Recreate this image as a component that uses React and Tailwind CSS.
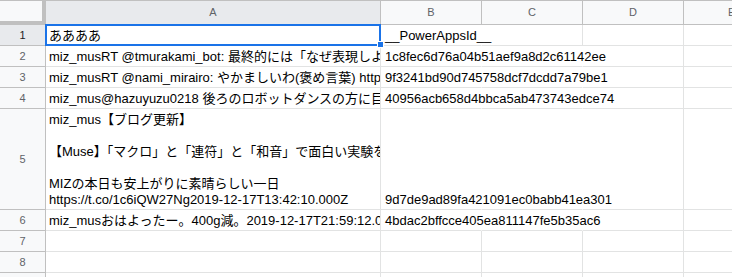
import React from 'react';

const font = { fontFamily: '"Liberation Sans", Arial, "Noto Sans CJK JP", sans-serif' };

const rows = [
  { n: 1, a: 'ああああ', b: '__PowerAppsId__', sel: true, hideB: true },
  { n: 2, a: 'miz_musRT @tmurakami_bot: 最終的には「なぜ表現しようとするのか」', b: '1c8fec6d76a04b51aef9a8d2c61142ee', hideB: true, hideC: true },
  { n: 3, a: 'miz_musRT @nami_mirairo: やかましいわ(褒め言葉) https://t.co/', b: '9f3241bd90d745758dcf7dcdd7a79be1', hideB: true, hideC: true },
  { n: 4, a: 'miz_mus@hazuyuzu0218 後ろのロボットダンスの方に目が', b: '40956acb658d4bbca5ab473743edce74', hideB: true, hideC: true },
  {
    n: 5,
    tall: true,
    a: 'miz_mus【ブログ更新】\n\n【Muse】「マクロ」と「連符」と「和音」で面白い実験をしてみた\n\nMIZの本日も安上がりに素晴らしい一日\nhttps://t.co/1c6iQW27Ng2019-12-17T13:42:10.000Z',
    b: '9d7de9ad89fa421091ec0babb41ea301',
    hideB: true,
    hideC: true,
  },
  { n: 6, a: 'miz_musおはよったー。400g減。2019-12-17T21:59:12.000Z', b: '4bdac2bffcce405ea811147fe5b35ac6', hideB: true, hideC: true },
  { n: 7 },
  { n: 8 },
  { n: 9 },
];

function HeaderCell({ label, width, active }) {
  return (
    <div
      className={`${width} h-[25px] shrink-0 border-t border-b border-r border-[#c0c0c0] flex items-center justify-center text-[11px] text-[#5f6368] ${active ? 'bg-[#e8eaed]' : 'bg-[#f8f9fa]'}`}
    >
      {label}
    </div>
  );
}

export default function App() {
  return (
    <div className="relative w-[732px] h-[277px] overflow-hidden bg-white text-black" style={font}>
      {/* column headers */}
      <div className="flex">
        <div className="w-[46px] h-[25px] shrink-0 border-t border-r-4 border-b-4 border-[#c0c0c0] bg-[#f8f9fa]" />
        <HeaderCell label="A" width="w-[335px]" active />
        <HeaderCell label="B" width="w-[101px]" />
        <HeaderCell label="C" width="w-[101px]" />
        <HeaderCell label="D" width="w-[101px]" />
        <div className="flex-1 h-[25px] border-t border-b border-[#c0c0c0] bg-[#f8f9fa] flex items-center pl-[44px] text-[11px] text-[#5f6368]">
          E
        </div>
      </div>

      {/* rows */}
      {rows.map((r) => (
        <div key={r.n} className={`flex ${r.tall ? 'h-[101px]' : 'h-[21px]'}`}>
          <div
            className={`w-[46px] shrink-0 border-r border-b border-[#c0c0c0] flex items-center justify-center text-[11px] ${r.sel ? 'bg-[#e8eaed] text-[#202124]' : 'bg-[#f8f9fa] text-[#5f6368]'}`}
          >
            {r.n}
          </div>
          <div className="w-[335px] shrink-0 border-r border-b border-[#e2e3e3] overflow-hidden flex items-end pl-[3px] pb-[1px]">
            <div className="whitespace-pre text-[13px] leading-[16px]">{r.a}</div>
          </div>
          <div
            className={`w-[101px] shrink-0 border-b border-r ${r.hideB ? 'border-r-transparent' : ''} border-[#e2e3e3] flex items-end pl-[4px] pb-[1px] relative z-10`}
            style={r.hideB ? { borderRightColor: 'transparent' } : undefined}
          >
            <div className="whitespace-nowrap text-[13px] leading-[16px]">{r.b}</div>
          </div>
          <div
            className="w-[101px] shrink-0 border-b border-r border-[#e2e3e3]"
            style={r.hideC ? { borderRightColor: 'transparent' } : undefined}
          />
          <div className="w-[101px] shrink-0 border-b border-r border-[#e2e3e3]" />
          <div className="flex-1 border-b border-[#e2e3e3]" />
        </div>
      ))}

      {/* selection A1 */}
      <div className="absolute left-[45px] top-[24px] w-[336px] h-[22px] border-2 border-[#1a73e8] pointer-events-none z-20" />
      <div className="absolute left-[377px] top-[41px] w-[7px] h-[7px] bg-[#1a73e8] border border-white z-30" />
    </div>
  );
}
